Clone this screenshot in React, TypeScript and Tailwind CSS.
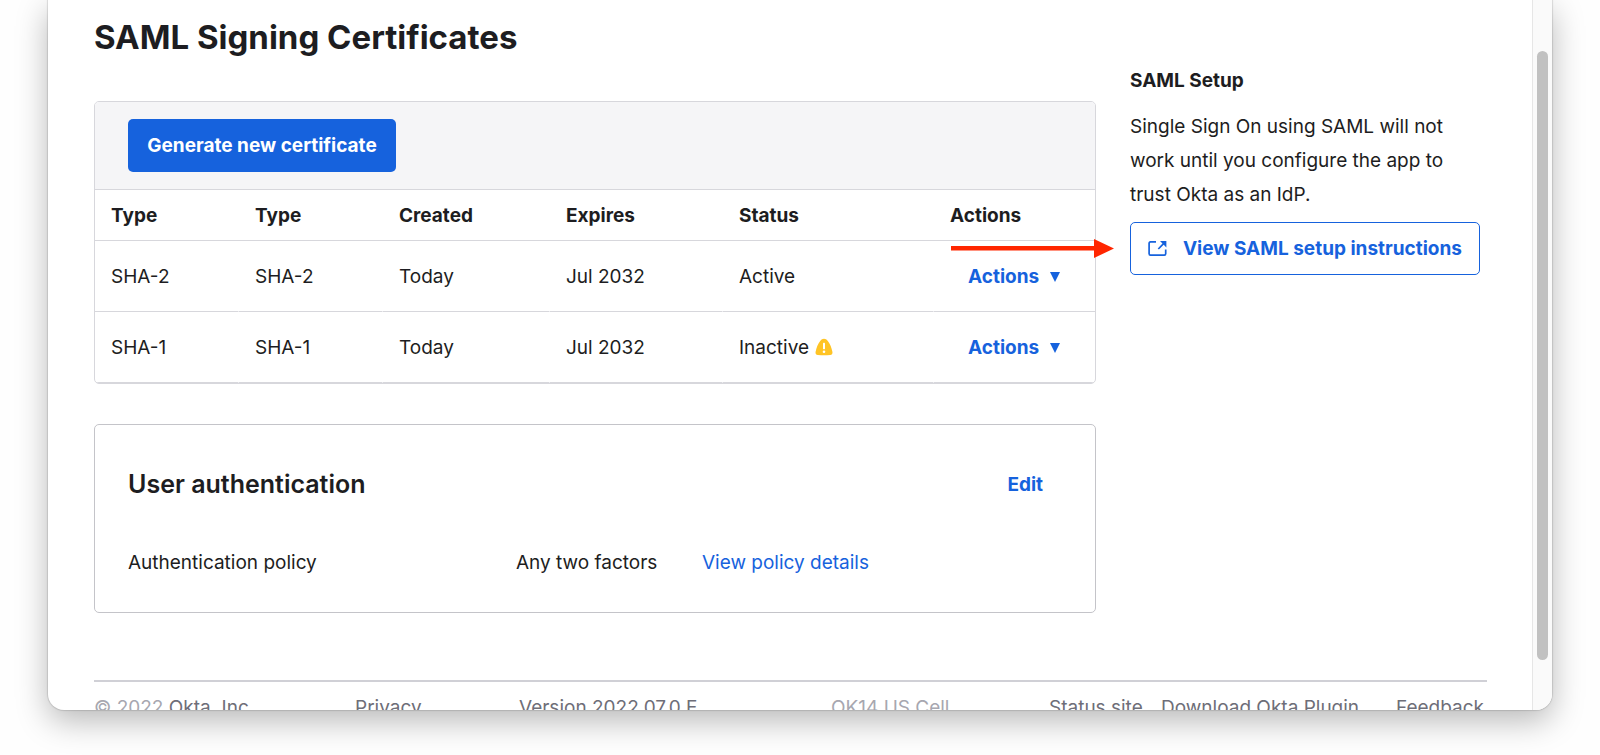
const certificates = [
  { type: "SHA-2", created: "Today", expires: "Jul 2032", status: "Active", warn: false },
  { type: "SHA-1", created: "Today", expires: "Jul 2032", status: "Inactive", warn: true },
];

const columns = [
  { label: "Type", width: "w-[14.4%]" },
  { label: "Type", width: "w-[14.4%]" },
  { label: "Created", width: "w-[16.7%]" },
  { label: "Expires", width: "w-[17.3%]" },
  { label: "Status", width: "w-[21.1%]" },
  { label: "Actions", width: "w-[16.1%]" },
];

function WarningIcon() {
  return (
    <svg viewBox="0 0 18 18" className="h-[18px] w-[18px]" role="img" aria-label="Warning">
      <path
        d="M9 .8c1.500 0 2.700.7 3.800 2.200 2.200 2.900 3.700 6.500 4.600 10.800.4 1.900-.4 3-2.200 3.200-4.100.4-8.300.4-12.400 0C1 16.800.2 15.700.6 13.800c.9-4.300 2.400-7.900 4.600-10.800C6.300 1.500 7.500.8 9 .8z"
        fill="#ffc425"
      />
      <rect x="8" y="4.800" width="2" height="6.400" rx=".6" fill="#fff" />
      <circle cx="9" cy="13.700" r="1.300" fill="#fff" />
    </svg>
  );
}

function ExternalIcon() {
  return (
    <svg viewBox="0 0 19 17" className="h-[17px] w-[19px] shrink-0" fill="none" stroke="currentColor" strokeWidth="1.700" aria-hidden="true">
      <path d="M8 1.900H2.400c-.8 0-1.300.5-1.300 1.300v10.600c0 .8.5 1.300 1.300 1.300h14c.8 0 1.300-.5 1.300-1.300V9.500" />
      <path d="M10.300 9l6-6.200" />
      <path d="M12 1h6.400v6.400z" fill="currentColor" stroke="none" />
    </svg>
  );
}

function Caret() {
  return (
    <svg viewBox="0 0 10 12" className="h-3 w-[10px]" fill="currentColor" aria-hidden="true">
      <path d="M0 2h10L5 12z" />
    </svg>
  );
}

function Arrow() {
  return (
    <svg
      viewBox="0 0 163 20"
      className="pointer-events-none absolute top-1/2 right-full mr-4 h-5 w-[163px] -translate-y-1/2"
      fill="#ff2600"
      aria-hidden="true"
    >
      <path d="M0 7h143V0L163 9.500 143 19V11.500H0z" />
    </svg>
  );
}

export default function App() {
  return (
    <div className="flex h-screen flex-col overflow-hidden bg-[#fefefe] px-12 pb-[45px] font-['Inter','Liberation_Sans',sans-serif] text-[19px] leading-[33px] text-[#1d1d21]">
      <div className="flex min-h-0 flex-1 rounded-b-2xl bg-white shadow-[0_0_1px_1px_rgba(0,0,0,0.12),0_11px_32px_rgba(0,0,0,0.28)]">
        <main className="min-w-0 flex-1 overflow-hidden pt-[15px] pr-[45px] pl-[46px]">
          <div className="flex gap-[34px]">
            <div className="min-w-0 flex-1">
              <h1 className="text-[33px] leading-[44px] font-bold">SAML Signing Certificates</h1>

              <section className="mt-[42px] overflow-hidden rounded-[5px] border border-[#d7d7dc]">
                <div className="border-b border-[#d7d7dc] bg-[#f5f5f7] px-[33px] py-[17px]">
                  <button type="button" className="h-[53px] min-w-[268px] rounded-[5px] bg-[#1662dd] px-[18px] font-bold text-white">
                    Generate new certificate
                  </button>
                </div>
                <table className="w-full table-fixed border-separate border-spacing-0 text-left">
                  <thead>
                    <tr>
                      {columns.map((column, i) => (
                        <th key={i} scope="col" className={`h-[51px] border-b border-[#d7d7dc] px-4 py-0 font-bold ${column.width}`}>
                          {column.label}
                        </th>
                      ))}
                    </tr>
                  </thead>
                  <tbody>
                    {certificates.map((cert) => (
                      <tr
                        key={cert.type}
                        className="[&>td]:h-[71px] [&>td]:border-r [&>td]:border-b [&>td]:border-r-white [&>td]:border-b-[#d7d7dc] [&>td]:px-4 [&>td:last-child]:border-r-0"
                      >
                        <td>{cert.type}</td>
                        <td>{cert.type}</td>
                        <td>{cert.created}</td>
                        <td>{cert.expires}</td>
                        <td>
                          <span className="flex items-center gap-[6px]">
                            {cert.status}
                            {cert.warn && <WarningIcon />}
                          </span>
                        </td>
                        <td>
                          <button type="button" className="ml-[18px] flex items-center gap-[11px] font-bold text-[#1662dd]">
                            Actions
                            <Caret />
                          </button>
                        </td>
                      </tr>
                    ))}
                  </tbody>
                </table>
              </section>

              <section className="mt-10 rounded-[5px] border border-[#c4c4c9] px-[33px] pt-[43px] pb-[33px]">
                <div className="flex items-center justify-between pr-[19px]">
                  <h2 className="text-[25px] leading-[33px] font-semibold">User authentication</h2>
                  <button type="button" className="font-bold text-[#1662dd]">
                    Edit
                  </button>
                </div>
                <div className="mt-[45px] flex">
                  <span className="w-[388px]">Authentication policy</span>
                  <span className="w-[186px]">Any two factors</span>
                  <a href="#policy" className="text-[#1662dd]">
                    View policy details
                  </a>
                </div>
              </section>
            </div>

            <aside className="w-[357px] shrink-0 pt-[49px]">
              <h2 className="font-bold">SAML Setup</h2>
              <p className="mt-[13px] leading-[34px]">
                Single Sign On using SAML will not work until you configure the app to trust Okta as an IdP.
              </p>
              <div className="relative mt-[10px] w-[350px]">
                <Arrow />
                <a
                  href="#instructions"
                  className="flex h-[53px] items-center justify-between rounded-[5px] border border-[#1662dd] px-[17px] font-bold whitespace-nowrap text-[#1662dd]"
                >
                  <ExternalIcon />
                  View SAML setup instructions
                </a>
              </div>
            </aside>
          </div>

          <footer className="mt-[67px] grid grid-cols-[261fr_164fr_312fr_218fr_112fr_235fr_91fr] border-t-2 border-[#d0d0d6] pt-[9px] leading-[33px] whitespace-nowrap text-[#6e6e78]">
            <span className="text-[#a7a7b0]">
              © 2022{" "}
              <a href="#okta" className="text-[#6e6e78]">
                Okta, Inc.
              </a>
            </span>
            <a href="#privacy">Privacy</a>
            <span>Version 2022.07.0 E</span>
            <span className="text-[#a7a7b0]">OK14 US Cell</span>
            <a href="#status">Status site</a>
            <a href="#plugin">Download Okta Plugin</a>
            <a href="#feedback">Feedback</a>
          </footer>
        </main>

        <div className="w-5 shrink-0 rounded-br-2xl border-l border-[#e6e6e6] bg-[#fafafa] pt-[51px] pl-1">
          <div className="h-[609px] w-[11px] rounded-full bg-[#c1c1c1]" />
        </div>
      </div>
    </div>
  );
}
